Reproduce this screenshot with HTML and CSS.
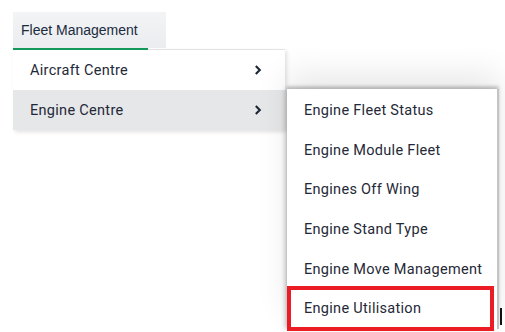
FILE: index.html
```html
<!DOCTYPE html>
<html>
<head>
<meta charset="utf-8">
<link rel="stylesheet" href="styles.css">
</head>
<body>
<div class="nav">
  <div class="tab">Fleet Management</div>
  <div class="menu">
    <div class="item">Aircraft Centre<svg class="chev" viewBox="0 0 12 12" width="12" height="12"><path d="M3.8 2 L7.8 6 L3.8 10" fill="none" stroke="#1d2733" stroke-width="2.1"/></svg></div>
    <div class="item active">Engine Centre<svg class="chev" viewBox="0 0 12 12" width="12" height="12"><path d="M3.8 2 L7.8 6 L3.8 10" fill="none" stroke="#1d2733" stroke-width="2.1"/></svg></div>
  </div>
  <div class="submenu">
    <div class="sitem">Engine Fleet Status</div>
    <div class="sitem">Engine Module Fleet</div>
    <div class="sitem">Engines Off Wing</div>
    <div class="sitem">Engine Stand Type</div>
    <div class="sitem">Engine Move Management</div>
    <div class="sitem highlight">Engine Utilisation</div>
  </div>
  <div class="cursor"></div>
</div>
</body>
</html>
```
FILE: styles.css
```css
html, body {
  margin: 0;
  padding: 0;
  background: #ffffff;
}
.nav {
  position: relative;
  width: 505px;
  height: 332px;
  overflow: hidden;
  padding: 12px 0 0 13px;
  box-sizing: border-box;
}
.tab {
  width: 153px;
  height: 36px;
  box-sizing: border-box;
  padding-left: 8px;
  display: flex;
  align-items: center;
  font-family: "Liberation Sans", Arial, sans-serif;
  font-size: 14px;
  color: #1b2a3c;
  background: linear-gradient(#f3f4f6, #eaecef);
  position: relative;
  z-index: 4;
}
.tab::after {
  content: "";
  position: absolute;
  left: 0;
  bottom: -2px;
  width: 135px;
  height: 2px;
  background: #12985a;
}
.menu {
  position: absolute;
  left: 13px;
  top: 49px;
  width: 272px;
  border-top: 1px solid #e2e3e5;
  background: #fff;
  box-shadow: 2px 2px 4px rgba(0,0,0,0.12);
  z-index: 1;
}
.item {
  height: 40px;
  display: flex;
  align-items: center;
  justify-content: space-between;
  padding: 0 21px 0 17px;
  font-family: Roboto, "Noto Sans", sans-serif;
  font-size: 14.5px;
  letter-spacing: 0.3px;
  color: #1f2937;
}
.item.active {
  background: #e6e7e9;
}
.chev {
  display: block;
}
.submenu {
  position: absolute;
  left: 287px;
  top: 89px;
  width: 210px;
  padding-top: 2px;
  background: #fff;
  border-right: 2px solid #c4c4c4;
  box-shadow: -3px 0 4px rgba(0,0,0,0.14), 0 -3px 3px rgba(0,0,0,0.18), 0 -16px 30px rgba(0,0,0,0.09);
  z-index: 2;
}
.sitem {
  height: 39.6px;
  display: flex;
  align-items: center;
  padding-left: 17px;
  font-family: Roboto, "Noto Sans", sans-serif;
  font-size: 14.5px;
  letter-spacing: 0.3px;
  color: #1f2937;
  position: relative;
}
.sitem.highlight::after {
  content: "";
  position: absolute;
  left: 0;
  right: 3px;
  top: -3px;
  bottom: -2px;
  border: 4px solid #ec1c24;
}
.cursor {
  position: absolute;
  left: 500px;
  top: 308px;
  width: 2px;
  height: 17px;
  background: #111;
  z-index: 3;
}
```
